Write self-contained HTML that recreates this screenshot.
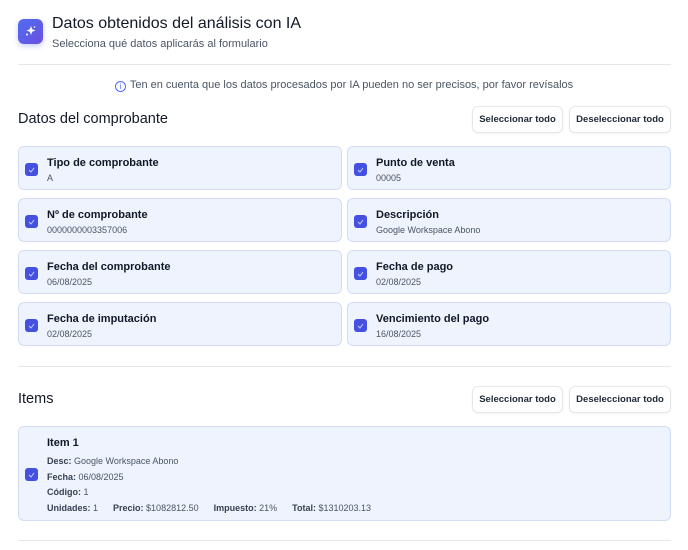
<!DOCTYPE html>
<html><head><meta charset="utf-8"><style>
*{box-sizing:border-box;margin:0;padding:0}
body{width:688px;height:550px;background:#fff;font-family:"Liberation Sans",sans-serif;color:#1f2937;position:relative;overflow:hidden}
.abs{position:absolute}
.icon{left:18px;top:19px;width:25px;height:25px;border-radius:6px;background:linear-gradient(135deg,#4f6df0,#6b4fe0);box-shadow:0 2px 6px rgba(99,102,241,.35)}
.title{left:52px;top:15px;font-size:16px;color:#111827}
.sub{left:52px;top:38px;font-size:11px;color:#4b5563}
.hr{left:18px;width:653px;height:1px;background:#e5e7eb}
.info{left:0;width:688px;top:79px;text-align:center;font-size:11px;color:#4b5563}
.h2{left:18px;font-size:14.5px;color:#111827}
.btn{height:27px;border:1px solid #e5e7eb;border-radius:6px;font-size:9.5px;font-weight:bold;color:#1f2937;display:flex;align-items:center;justify-content:center;background:#fff;box-shadow:0 1px 2px rgba(0,0,0,.05)}
.card{width:324px;height:44px;background:#eef3fd;border:1px solid #d3def5;border-radius:6px}
.cb{position:absolute;left:6px;width:13px;height:13px;border-radius:3px;background:#4451e0}
.cb svg{position:absolute;left:2px;top:2px}
.card .l{position:absolute;left:28px;top:10px;font-size:11px;font-weight:bold;color:#111827}
.card .v{position:absolute;left:28px;top:26px;font-size:9px;color:#4b5563}
.it{font-size:9px;color:#4b5563;position:absolute;left:28px}
.it b{color:#374151}
</style></head><body>
<div class="abs icon"><svg width="25" height="25" viewBox="0 0 25 25"><path d="M13 7l1.2 3.3 3.3 1.2-3.3 1.2L13 16l-1.2-3.3-3.3-1.2 3.3-1.2z" fill="#fff"/><circle cx="9" cy="15.5" r="1" fill="#fff"/><circle cx="16.5" cy="8" r=".8" fill="#fff"/></svg></div>
<div class="abs title">Datos obtenidos del análisis con IA</div>
<div class="abs sub">Selecciona qué datos aplicarás al formulario</div>
<div class="abs hr" style="top:64px"></div>
<div class="abs info"><span style="display:inline-block;width:11px;height:11px;border:1px solid #4f6df0;border-radius:50%;font-size:8px;line-height:9px;color:#4f6df0;vertical-align:-1px;margin-right:4px">i</span>Ten en cuenta que los datos procesados por IA pueden no ser precisos, por favor revísalos</div>
<div class="abs h2" style="top:111px">Datos del comprobante</div>
<div class="abs btn" style="left:472px;top:106px;width:91px">Seleccionar todo</div>
<div class="abs btn" style="left:569px;top:106px;width:102px">Deseleccionar todo</div>

<div class="abs card" style="left:18px;top:146px"><div class="cb" style="top:16px"><svg width="9" height="9"><path d="M2 5l2 2 3-4" stroke="#c7d0ff" fill="none" stroke-width="1"/></svg></div><div class="l">Tipo de comprobante</div><div class="v">A</div></div>
<div class="abs card" style="left:347px;top:146px"><div class="cb" style="top:16px"><svg width="9" height="9"><path d="M2 5l2 2 3-4" stroke="#c7d0ff" fill="none" stroke-width="1"/></svg></div><div class="l">Punto de venta</div><div class="v">00005</div></div>
<div class="abs card" style="left:18px;top:198px"><div class="cb" style="top:16px"><svg width="9" height="9"><path d="M2 5l2 2 3-4" stroke="#c7d0ff" fill="none" stroke-width="1"/></svg></div><div class="l">Nº de comprobante</div><div class="v">0000000003357006</div></div>
<div class="abs card" style="left:347px;top:198px"><div class="cb" style="top:16px"><svg width="9" height="9"><path d="M2 5l2 2 3-4" stroke="#c7d0ff" fill="none" stroke-width="1"/></svg></div><div class="l">Descripción</div><div class="v">Google Workspace Abono</div></div>
<div class="abs card" style="left:18px;top:250px"><div class="cb" style="top:16px"><svg width="9" height="9"><path d="M2 5l2 2 3-4" stroke="#c7d0ff" fill="none" stroke-width="1"/></svg></div><div class="l">Fecha del comprobante</div><div class="v">06/08/2025</div></div>
<div class="abs card" style="left:347px;top:250px"><div class="cb" style="top:16px"><svg width="9" height="9"><path d="M2 5l2 2 3-4" stroke="#c7d0ff" fill="none" stroke-width="1"/></svg></div><div class="l">Fecha de pago</div><div class="v">02/08/2025</div></div>
<div class="abs card" style="left:18px;top:302px"><div class="cb" style="top:16px"><svg width="9" height="9"><path d="M2 5l2 2 3-4" stroke="#c7d0ff" fill="none" stroke-width="1"/></svg></div><div class="l">Fecha de imputación</div><div class="v">02/08/2025</div></div>
<div class="abs card" style="left:347px;top:302px"><div class="cb" style="top:16px"><svg width="9" height="9"><path d="M2 5l2 2 3-4" stroke="#c7d0ff" fill="none" stroke-width="1"/></svg></div><div class="l">Vencimiento del pago</div><div class="v">16/08/2025</div></div>

<div class="abs hr" style="top:366px"></div>
<div class="abs h2" style="top:391px">Items</div>
<div class="abs btn" style="left:472px;top:386px;width:91px">Seleccionar todo</div>
<div class="abs btn" style="left:569px;top:386px;width:102px">Deseleccionar todo</div>
<div class="abs card" style="left:18px;top:426px;width:653px;height:95px">
<div class="cb" style="top:41px"><svg width="9" height="9"><path d="M2 5l2 2 3-4" stroke="#c7d0ff" fill="none" stroke-width="1"/></svg></div>
<div class="it" style="top:10px;font-size:11px;font-weight:bold;color:#111827">Item 1</div>
<div class="it" style="top:29px"><b>Desc:</b> Google Workspace Abono</div>
<div class="it" style="top:45px"><b>Fecha:</b> 06/08/2025</div>
<div class="it" style="top:60px"><b>Código:</b> 1</div>
<div class="it" style="top:76px"><b>Unidades:</b> 1 &nbsp;&nbsp;&nbsp;&nbsp; <b>Precio:</b> $1082812.50 &nbsp;&nbsp;&nbsp;&nbsp; <b>Impuesto:</b> 21% &nbsp;&nbsp;&nbsp;&nbsp; <b>Total:</b> $1310203.13</div>
</div>
<div class="abs hr" style="top:540px"></div>
</body></html>
